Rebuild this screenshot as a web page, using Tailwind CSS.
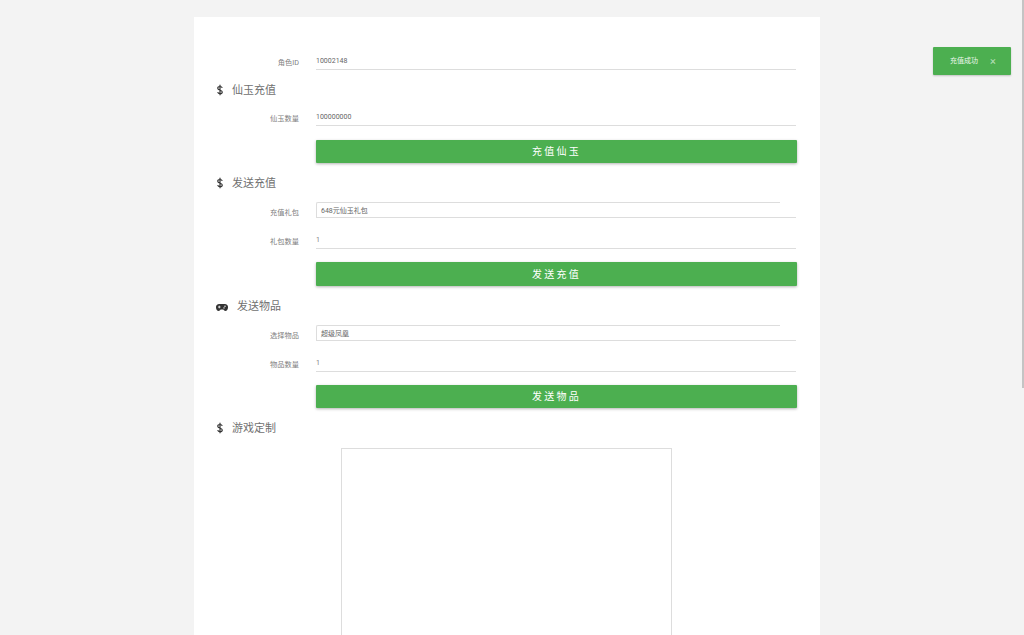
<!DOCTYPE html>
<html lang="zh-CN">

<head>
    <meta charset="UTF-8">
    <title>充值</title>
    <script src="https://cdn.jsdelivr.net/npm/@tailwindcss/browser@4"></script>
</head>

<body class="h-[635px] overflow-hidden bg-[#f3f3f3] antialiased font-['Roboto','Noto_Sans_CJK_SC',sans-serif]">
    <div class="relative h-[635px] pt-[17px]">
        <div class="ml-[194px] w-[626px] h-[618px] overflow-hidden bg-white pt-[35px] pl-[22px] pr-[24px]">

            <!-- role id -->
            <div class="flex h-[18px]">
                <label class="w-[83px] pt-[6px] text-right text-[7.25px] leading-[10px] text-[#808080]">角色ID</label>
                <div class="ml-[17px] w-[480px] h-[18px] border-b border-[#ddd] pt-[4px] text-[7px] leading-[10px] text-[#666]">10002148</div>
            </div>

            <!-- 仙玉充值 -->
            <div class="flex items-center h-[20px] mt-[11px]">
                <svg class="ml-[1px] mb-[2px] w-[6px] h-[12px] text-[#333]" viewBox="0 0 8 14" fill="none" stroke="currentColor" stroke-width="1.6">
                    <path d="M7 4.200C6.600 3 5.400 2.300 4 2.300 2.300 2.300 1 3.200 1 4.700c0 3.400 6 1.800 6 4.800 0 1.500-1.300 2.400-3 2.400-1.500 0-2.700-.8-3.100-2M4 0v14" />
                </svg>
                <h2 class="ml-[9px] text-[11px] leading-[16px] text-[#707070]">仙玉充值</h2>
            </div>
            <div class="flex h-[18px] mt-[7px]">
                <label class="w-[83px] pt-[6px] text-right text-[7.25px] leading-[10px] text-[#808080]">仙玉数量</label>
                <div class="ml-[17px] w-[480px] h-[18px] border-b border-[#ddd] pt-[4px] text-[7px] leading-[10px] text-[#666]">100000000</div>
            </div>
            <button class="block ml-[100px] mt-[14px] w-[481px] h-[23px] rounded-[1px] bg-[#4caf50] text-[10px] tracking-[2.2px] text-white shadow-[0_1px_3px_rgba(0,0,0,0.3)]">充值仙玉</button>

            <!-- 发送充值 -->
            <div class="flex items-center h-[20px] mt-[11px]">
                <svg class="ml-[1px] mb-[2px] w-[6px] h-[12px] text-[#333]" viewBox="0 0 8 14" fill="none" stroke="currentColor" stroke-width="1.6">
                    <path d="M7 4.200C6.600 3 5.400 2.300 4 2.300 2.300 2.300 1 3.200 1 4.700c0 3.400 6 1.800 6 4.800 0 1.500-1.300 2.400-3 2.400-1.500 0-2.700-.8-3.100-2M4 0v14" />
                </svg>
                <h2 class="ml-[9px] text-[11px] leading-[16px] text-[#707070]">发送充值</h2>
            </div>
            <div class="flex h-[16px] mt-[8px]">
                <label class="w-[83px] pt-[6px] text-right text-[7.25px] leading-[10px] text-[#808080]">充值礼包</label>
                <div class="ml-[17px] w-[480px] h-[16px] border-b border-[#ddd]">
                    <div class="w-[464px] h-[15px] border-t border-l border-[#ddd] rounded-tl-[2px] pl-[4px] pt-[3px] text-[7px] leading-[10px] text-[#666]">648元仙玉礼包</div>
                </div>
            </div>
            <div class="flex h-[18px] mt-[13px]">
                <label class="w-[83px] pt-[6px] text-right text-[7.25px] leading-[10px] text-[#808080]">礼包数量</label>
                <div class="ml-[17px] w-[480px] h-[18px] border-b border-[#ddd] pt-[4px] text-[7px] leading-[10px] text-[#808080]">1</div>
            </div>
            <button class="block ml-[100px] mt-[13px] w-[481px] h-[24px] rounded-[1px] bg-[#4caf50] text-[10px] tracking-[2.2px] text-white shadow-[0_1px_3px_rgba(0,0,0,0.3)]">发送充值</button>

            <!-- 发送物品 -->
            <div class="flex items-center h-[20px] mt-[11px]">
                <svg class="w-[12px] h-[7px] text-[#333]" viewBox="0 0 12 7">
                    <path d="M3.200 0h5.600a3.200 3.200 0 0 1 3.200 3.500c0 1.900-1.200 3.500-2.600 3.500-1 0-1.500-.9-2.100-1.500H4.700C4.100 6.100 3.600 7 2.600 7 1.200 7 0 5.400 0 3.500A3.200 3.200 0 0 1 3.200 0z" fill="currentColor" />
                    <path d="M2 3h2.600M3.300 1.700v2.600" stroke="#fff" stroke-width="0.8" />
                    <circle cx="9" cy="2.200" r="0.700" fill="#fff" />
                    <circle cx="8" cy="3.900" r="0.700" fill="#fff" />
                </svg>
                <h2 class="ml-[9px] text-[11px] leading-[16px] text-[#707070]">发送物品</h2>
            </div>
            <div class="flex h-[16px] mt-[8px]">
                <label class="w-[83px] pt-[6px] text-right text-[7.25px] leading-[10px] text-[#808080]">选择物品</label>
                <div class="ml-[17px] w-[480px] h-[16px] border-b border-[#ddd]">
                    <div class="w-[464px] h-[15px] border-t border-l border-[#ddd] rounded-tl-[2px] pl-[4px] pt-[3px] text-[7px] leading-[10px] text-[#666]">超级凤凰</div>
                </div>
            </div>
            <div class="flex h-[18px] mt-[13px]">
                <label class="w-[83px] pt-[6px] text-right text-[7.25px] leading-[10px] text-[#808080]">物品数量</label>
                <div class="ml-[17px] w-[480px] h-[18px] border-b border-[#ddd] pt-[4px] text-[7px] leading-[10px] text-[#808080]">1</div>
            </div>
            <button class="block ml-[100px] mt-[13px] w-[481px] h-[23px] rounded-[1px] bg-[#4caf50] text-[10px] tracking-[2.2px] text-white shadow-[0_1px_3px_rgba(0,0,0,0.3)]">发送物品</button>

            <!-- 游戏定制 -->
            <div class="flex items-center h-[20px] mt-[11px]">
                <svg class="ml-[1px] mb-[2px] w-[6px] h-[12px] text-[#333]" viewBox="0 0 8 14" fill="none" stroke="currentColor" stroke-width="1.6">
                    <path d="M7 4.200C6.600 3 5.400 2.300 4 2.300 2.300 2.300 1 3.200 1 4.700c0 3.400 6 1.800 6 4.800 0 1.500-1.300 2.400-3 2.400-1.500 0-2.700-.8-3.100-2M4 0v14" />
                </svg>
                <h2 class="ml-[9px] text-[11px] leading-[16px] text-[#707070]">游戏定制</h2>
            </div>
            <div class="ml-[125px] mt-[9px] w-[331px] h-[300px] border border-[#ddd]"></div>
        </div>

        <!-- toast -->
        <div class="absolute left-[933px] top-[47px] flex items-center w-[78px] h-[28px] rounded-[1px] bg-[#4caf50] pl-[17px] pt-[1px] text-[7px] text-white/90 shadow-[0_1px_2px_rgba(0,0,0,0.2)]">
            <span>充值成功</span>
            <span class="ml-[12px] text-[11px] leading-none text-white/60">×</span>
        </div>

        <!-- scrollbar thumb -->
        <div class="absolute right-0 top-0 w-[2px] h-[388px] bg-[#c4c4c4]"></div>
    </div>
</body>

</html>
